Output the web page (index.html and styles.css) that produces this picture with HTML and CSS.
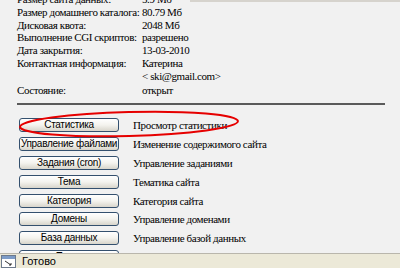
FILE: index.html
```html
<!DOCTYPE html>
<html>
<head>
<meta charset="utf-8">
<link rel="stylesheet" href="styles.css">
</head>
<body>
<div class="window">
  <div class="page">
    <div class="topstrip"></div>
    <div class="content">
      <div class="info">
        <div class="label">Размер сайта данных:</div><div class="value">5.9 Мб</div>
        <div class="label">Размер домашнего каталога:</div><div class="value">80.79 Мб</div>
        <div class="label">Дисковая квота:</div><div class="value">2048 Мб</div>
        <div class="label">Выполнение CGI скриптов:</div><div class="value">разрешено</div>
        <div class="label">Дата закрытия:</div><div class="value">13-03-2010</div>
        <div class="label">Контактная информация:</div><div class="value">Катерина<br>&lt; ski@gmail.com&gt;</div>
        <div class="label gap">Состояние:</div><div class="value gap">открыт</div>
      </div>
      <div class="rule"></div>
      <div class="actions">
        <button class="btn">Статистика</button><div class="desc">Просмотр статистики</div>
        <button class="btn">Управление файлами</button><div class="desc">Изменение содержимого сайта</div>
        <button class="btn">Задания (cron)</button><div class="desc">Управление заданиями</div>
        <button class="btn">Тема</button><div class="desc">Тематика сайта</div>
        <button class="btn">Категория</button><div class="desc">Категория сайта</div>
        <button class="btn">Домены</button><div class="desc">Управление доменами</div>
        <button class="btn">База данных</button><div class="desc">Управление базой данных</div>
        <button class="btn">Почта</button><div class="desc">Управление почтой</div>
      </div>
    </div>
    <svg class="mark" width="240" height="40" viewBox="0 0 240 40">
      <ellipse cx="111" cy="20" rx="109" ry="12" transform="rotate(-1.5 111 20)" fill="none" stroke="#e60000" stroke-width="2"/>
    </svg>
  </div>
  <div class="status">
    <svg class="sicon" width="18" height="14" viewBox="0 0 18 14">
      <rect x="1.5" y="1.5" width="14" height="12" fill="#fff" stroke="#6d7a8c"/>
      <rect x="2" y="2" width="13" height="3" fill="#7d9cc8"/>
      <path d="M5 7 L11 11 M9 11 L11 11 L11 9" stroke="#333" stroke-width="1" fill="none"/>
    </svg>
    <span class="stext">Готово</span>
  </div>
</div>
</body>
</html>
```
FILE: styles.css
```css
html, body {
  margin: 0;
  padding: 0;
}
body {
  background: #f0f0f0;
}
.window {
  width: 400px;
  height: 268px;
  display: flex;
  flex-direction: column;
  overflow: hidden;
}
.page {
  flex: 1;
  position: relative;
  overflow: hidden;
  background: #f1f1f1;
}
.topstrip {
  height: 2px;
  margin-left: 190px;
  background: #d6d3cd;
}
.content {
  margin-top: -9px;
  padding-left: 17px;
  font-family: "Liberation Serif", "Times New Roman", serif;
  font-size: 11px;
  letter-spacing: -0.4px;
  color: #000;
}
.info {
  display: grid;
  grid-template-columns: 125px 1fr;
  line-height: 12.8px;
  white-space: nowrap;
}
.info .gap {
  padding-top: 1px;
}
.rule {
  width: 368px;
  height: 2px;
  margin-top: 7px;
  background: #5a5a5a;
}
.actions {
  margin-top: 13px;
  padding-left: 2px;
  display: grid;
  grid-template-columns: 100px 1fr;
  column-gap: 14px;
  row-gap: 4.8px;
  align-items: center;
}
.btn {
  width: 100px;
  height: 14px;
  box-sizing: border-box;
  margin: 0;
  padding: 0;
  border: 1px solid #34506e;
  border-radius: 3px;
  background: linear-gradient(#ffffff, #f4f3ee 50%, #d8d5cb);
  font-family: "Liberation Sans", Arial, sans-serif;
  font-size: 10px;
  letter-spacing: -0.3px;
  line-height: 12px;
  color: #000;
  text-align: center;
  white-space: nowrap;
  overflow: hidden;
}
.desc {
  line-height: 14px;
  white-space: nowrap;
}
.mark {
  position: absolute;
  left: 18px;
  top: 104px;
}
.status {
  height: 14px;
  flex: none;
  border-top: 1px solid #b9b6ac;
  background: #ece9d8;
  display: flex;
  align-items: center;
  gap: 4px;
  font-family: "Liberation Sans", Arial, sans-serif;
  font-size: 11px;
  color: #000;
}
.sicon {
  flex: none;
}
.stext {
  line-height: 13px;
}
```
